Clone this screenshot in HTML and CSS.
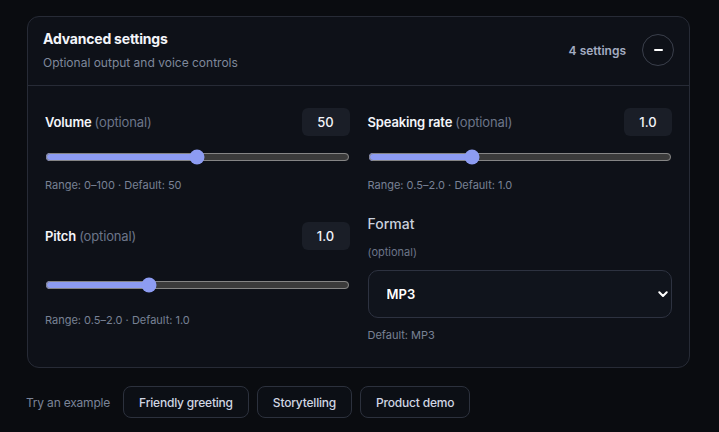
FILE: index.html
```html
<!DOCTYPE html>
<html lang="en">
<head>
<meta charset="utf-8">
<title>Advanced settings</title>
<link rel="stylesheet" href="styles.css">
</head>
<body>
<div class="page">
  <section class="card">
    <header class="card-head">
      <div class="head-text">
        <h2 class="title">Advanced settings</h2>
        <p class="subtitle">Optional output and voice controls</p>
      </div>
      <div class="head-side">
        <span class="count">4 settings</span>
        <button class="toggle" aria-label="Collapse">
          <svg width="9" height="2" viewBox="0 0 9 2"><rect x="0" y="0" width="9" height="2" rx="1" fill="#ffffff"/></svg>
        </button>
      </div>
    </header>
    <div class="card-body">
      <div class="field">
        <div class="field-head">
          <label class="label">Volume <span class="opt">(optional)</span></label>
          <span class="value">50</span>
        </div>
        <input class="range" type="range" min="0" max="100" step="1" value="50">
        <p class="hint">Range: 0–100 · Default: 50</p>
      </div>
      <div class="field">
        <div class="field-head">
          <label class="label">Speaking rate <span class="opt">(optional)</span></label>
          <span class="value">1.0</span>
        </div>
        <input class="range" type="range" min="0.5" max="2" step="0.1" value="1.0">
        <p class="hint">Range: 0.5–2.0 · Default: 1.0</p>
      </div>
      <div class="field field-loose">
        <div class="field-head">
          <label class="label">Pitch <span class="opt">(optional)</span></label>
          <span class="value">1.0</span>
        </div>
        <input class="range" type="range" min="0.5" max="2" step="0.1" value="1.0">
        <p class="hint">Range: 0.5–2.0 · Default: 1.0</p>
      </div>
      <div class="field">
        <label class="select-label">Format</label>
        <p class="select-opt">(optional)</p>
        <div class="select-wrap">
          <select class="select">
            <option>MP3</option>
            <option>WAV</option>
            <option>OGG</option>
          </select>
          <svg class="chevron" width="10" height="7" viewBox="0 0 10 7"><path d="M1.3 1.3 L5 5 L8.7 1.3" fill="none" stroke="#ffffff" stroke-width="2" stroke-linecap="round" stroke-linejoin="round"/></svg>
        </div>
        <p class="hint hint-select">Default: MP3</p>
      </div>
    </div>
  </section>
  <div class="examples">
    <span class="examples-label">Try an example</span>
    <button class="chip">Friendly greeting</button>
    <button class="chip">Storytelling</button>
    <button class="chip">Product demo</button>
  </div>
</div>
</body>
</html>
```
FILE: styles.css
```css
* { box-sizing: border-box; }
html, body { margin: 0; padding: 0; }
body {
  background: #0a0c10;
  font-family: Inter, "Noto Sans", sans-serif;
  color: #e8ecf4;
  color-scheme: dark;
  width: 719px;
  height: 432px;
  overflow: hidden;
}
.page {
  padding: 16px 29px 0 27px;
}
.card {
  background: #0e1118;
  border: 1px solid #272b36;
  border-radius: 12px;
}
.card-head {
  display: flex;
  align-items: center;
  justify-content: space-between;
  padding: 12px 15px 14px 15px;
  border-bottom: 1px solid #272b36;
}
.title {
  margin: 0;
  font-size: 14px;
  line-height: 20px;
  font-weight: 700;
  letter-spacing: -0.2px;
  color: #f3f5fa;
}
.subtitle {
  margin: 6px 0 0;
  font-size: 12px;
  line-height: 16px;
  color: #7f889b;
}
.head-side {
  display: flex;
  align-items: center;
  gap: 16px;
}
.count {
  font-size: 12px;
  font-weight: 600;
  color: #a3acc1;
}
.toggle {
  width: 32px;
  height: 32px;
  border-radius: 50%;
  border: 1px solid #3a3f4b;
  background: transparent;
  display: flex;
  align-items: center;
  justify-content: center;
  padding: 0;
}
.card-body {
  display: grid;
  grid-template-columns: 1fr 1fr;
  column-gap: 18px;
  row-gap: 21px;
  padding: 22px 17px 24px;
}
.field-head {
  display: flex;
  align-items: center;
  justify-content: space-between;
  height: 28px;
}
.label {
  font-size: 13px;
  font-weight: 600;
  letter-spacing: -0.15px;
  color: #f3f5fa;
}
.opt {
  font-weight: 400;
  color: #6c7589;
}
.value {
  width: 48px;
  height: 28px;
  border-radius: 6px;
  background: #1a1e27;
  font-size: 13px;
  font-weight: 500;
  color: #f3f5fa;
  display: flex;
  align-items: center;
  justify-content: center;
}
.range {
  display: block;
  width: 100%;
  margin: 13px 0 0;
  height: 16px;
  accent-color: #8d9cf2;
}
.hint {
  margin: 12px 0 0;
  font-size: 11px;
  line-height: 16px;
  color: #788195;
}
.field-loose {
  padding-top: 8px;
}
.field-loose .range {
  margin-top: 27px;
}
.field-loose .hint {
  margin-top: 19px;
}
.select-label {
  display: block;
  font-size: 14px;
  line-height: 20px;
  font-weight: 500;
  color: #c9d0dd;
}
.select-opt {
  margin: 10px 0 0;
  font-size: 11px;
  line-height: 16px;
  color: #6c7589;
}
.select-wrap {
  position: relative;
  margin-top: 10px;
}
.select {
  appearance: none;
  -webkit-appearance: none;
  display: block;
  width: 100%;
  height: 48px;
  border: 1px solid #2d3240;
  border-radius: 10px;
  background: #10141c;
  color: #ffffff;
  font-family: inherit;
  font-size: 13px;
  font-weight: 600;
  padding: 0 30px 0 18px;
}
.chevron {
  position: absolute;
  right: 4px;
  top: 21px;
}
.hint-select {
  margin-top: 9px;
}
.examples {
  display: flex;
  align-items: center;
  gap: 8px;
  margin-top: 18px;
  margin-left: -1px;
}
.examples-label {
  font-size: 12px;
  letter-spacing: -0.2px;
  color: #7b8498;
  margin-right: 5px;
}
.chip {
  height: 32px;
  padding: 0 15px;
  border: 1px solid #2c313d;
  border-radius: 8px;
  background: #0c0f15;
  color: #d0d6e3;
  font-family: inherit;
  font-size: 12px;
  font-weight: 500;
  letter-spacing: -0.2px;
}
```
